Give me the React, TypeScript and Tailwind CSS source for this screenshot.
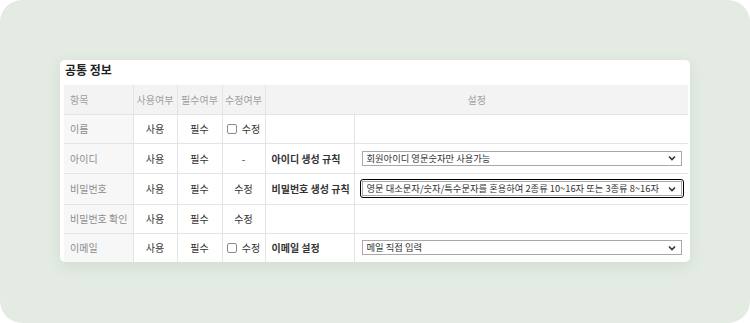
import { ReactNode } from 'react'

const font = { fontFamily: '"Noto Sans CJK KR", "Noto Sans", sans-serif' }

function Chevron() {
  return (
    <svg width="8" height="6" viewBox="0 0 8 6" className="shrink-0">
      <path d="M1 1.5 L4 4.5 L7 1.5" fill="none" stroke="#333" strokeWidth="1.6" />
    </svg>
  )
}

function FakeSelect({ text, focused }: { text: string; focused?: boolean }) {
  const box = (
    <div className="flex h-[15px] items-center justify-between border border-[#a9a9a9] bg-white pl-[4px] pr-[5px] text-[9.3px] leading-[13px] text-[#333]">
      <span className="overflow-hidden whitespace-nowrap">{text}</span>
      <Chevron />
    </div>
  )
  if (!focused) return box
  return <div className="-m-[2px] rounded-[3px] border border-black p-[1px]">{box}</div>
}

function Check() {
  return (
    <span className="flex items-center justify-center gap-[5px]">
      <span className="h-[10px] w-[10px] rounded-[2px] border border-[#8a8a8a] bg-white" />
      수정
    </span>
  )
}

type Row = {
  name: string
  edit: ReactNode
  label?: string
  select?: string
  focused?: boolean
  h: string
}

const rows: Row[] = [
  { name: '이름', edit: <Check />, h: 'h-[29px]' },
  { name: '아이디', edit: '-', label: '아이디 생성 규칙', select: '회원아이디 영문숫자만 사용가능', h: 'h-[30px]' },
  {
    name: '비밀번호',
    edit: '수정',
    label: '비밀번호 생성 규칙',
    select: '영문 대소문자/숫자/특수문자를 혼용하여 2종류 10~16자 또는 3종류 8~16자',
    focused: true,
    h: 'h-[31px]',
  },
  { name: '비밀번호 확인', edit: '수정', h: 'h-[29px]' },
  { name: '이메일', edit: <Check />, label: '이메일 설정', select: '메일 직접 입력', h: 'h-[29px]' },
]

export default function App() {
  const cell = 'border border-[#e4e4e4] p-0'
  return (
    <div className="h-[323px] w-[750px] bg-white" style={font}>
      <div className="h-full w-full rounded-[22px] bg-[#e3ebe2] pl-[60px] pt-[60px]">
        <div className="w-[630px] overflow-hidden rounded-[5px] bg-white pl-[4px] pr-[2px] shadow-[0_4px_14px_rgba(90,120,90,0.12)]">
          <h2 className="flex h-[25px] items-center pl-[1px] pb-[5px] text-[12px] font-bold text-[#222]">공통 정보</h2>
          <table className="w-[624px] table-fixed border-collapse text-[10px] text-[#333]">
            <colgroup>
              <col className="w-[69px]" />
              <col className="w-[44px]" />
              <col className="w-[45px]" />
              <col className="w-[43px]" />
              <col className="w-[89px]" />
              <col className="w-[334px]" />
            </colgroup>
            <thead>
              <tr className="h-[29px] bg-[#f3f3f3] text-[#a0a0a0]">
                <th className={`${cell} border-t-0 border-l-0 pl-[6px] text-left font-normal`}>항목</th>
                <th className={`${cell} border-t-0 font-normal`}>사용여부</th>
                <th className={`${cell} border-t-0 font-normal`}>필수여부</th>
                <th className={`${cell} border-t-0 font-normal`}>수정여부</th>
                <th colSpan={2} className={`${cell} border-t-0 border-r-0 font-normal`}>설정</th>
              </tr>
            </thead>
            <tbody>
              {rows.map((r, i) => {
                const last = i === rows.length - 1 ? 'border-b-0' : ''
                return (
                  <tr key={r.name} className={r.h}>
                    <td className={`${cell} ${last} border-l-0 bg-[#f7f7f7] pl-[6px] text-[#8c8c8c]`}>{r.name}</td>
                    <td className={`${cell} ${last} text-center`}>사용</td>
                    <td className={`${cell} ${last} text-center`}>필수</td>
                    <td className={`${cell} ${last} text-center`}>{r.edit}</td>
                    <td className={`${cell} ${last} pl-[6px] font-semibold text-[#333]`}>{r.label}</td>
                    <td className={`${cell} ${last} border-r-0 pl-[7px] pr-[6px]`}>
                      {r.select && <FakeSelect text={r.select} focused={r.focused} />}
                    </td>
                  </tr>
                )
              })}
            </tbody>
          </table>
        </div>
      </div>
    </div>
  )
}
